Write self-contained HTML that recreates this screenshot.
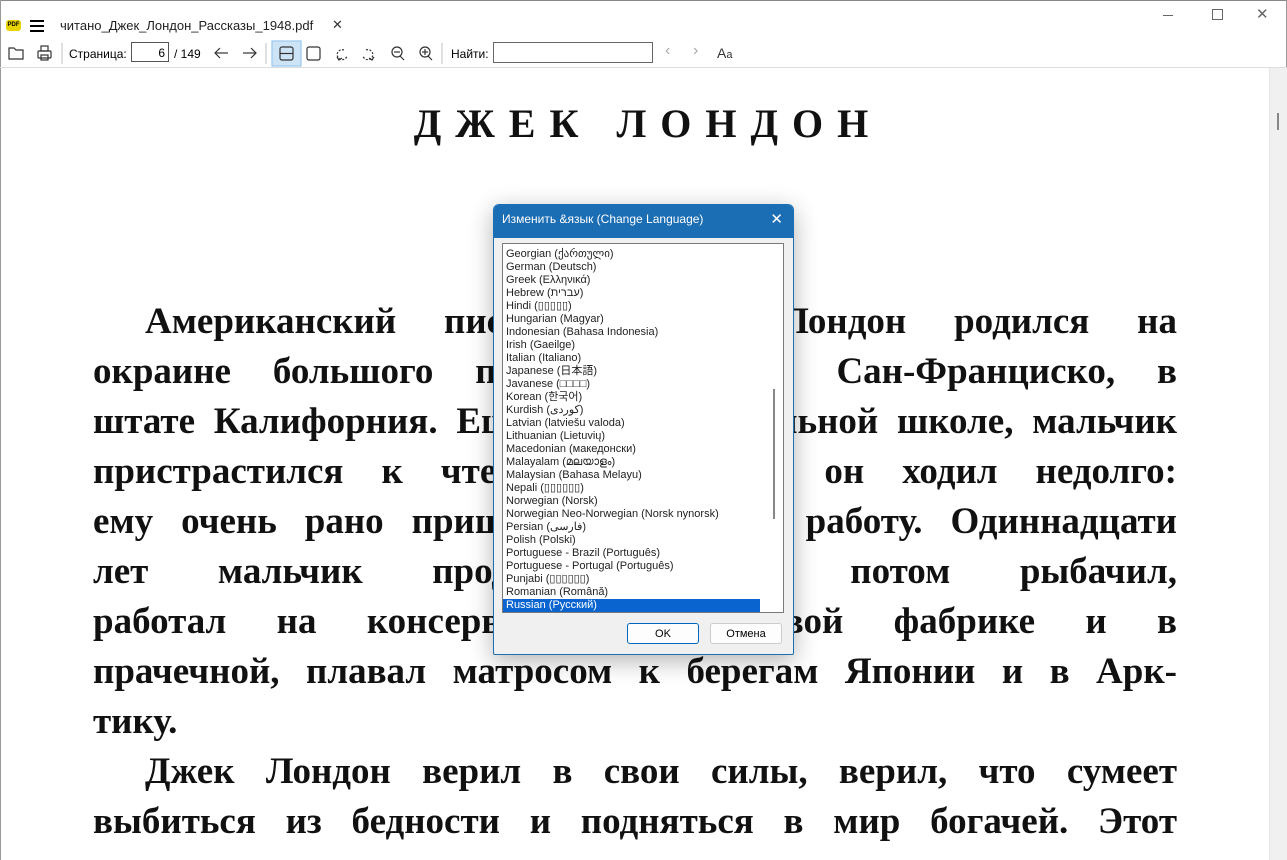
<!DOCTYPE html>
<html><head><meta charset="utf-8"><style>
body{margin:0;width:1287px;height:860px;overflow:hidden;background:#fff;font-family:"Liberation Sans","Noto Sans CJK JP",sans-serif;position:relative}
.abs{position:absolute}
.ui{font-size:12px;color:#000}
.line{position:absolute;left:93px;width:1084px;font-family:"Liberation Serif",serif;font-weight:bold;font-size:37px;text-align:justify;text-align-last:justify;white-space:nowrap;line-height:44px;color:#111}
.line.nj{text-align-last:left}
.row{height:13px;line-height:13px;font-size:11px;padding-left:3px;white-space:nowrap;color:#222}
</style></head><body>
<div class="abs" style="left:0;top:0;width:1287px;height:1px;background:#888"></div>
<div class="abs" style="left:0;top:0;width:1px;height:860px;background:#999"></div>
<div class="abs" style="right:0;top:0;width:1px;height:860px;background:#999"></div>
<div class="abs" style="left:6px;top:20px;width:15px;height:11px;background:#e8d400;border-radius:3px;font-size:6px;font-weight:bold;text-align:center;line-height:11px">PDF</div>
<div class="abs" style="left:30px;top:20px;width:14px;height:2px;background:#000;box-shadow:0 5px 0 #000,0 10px 0 #000"></div>
<div class="abs ui" style="left:60px;top:18px;font-size:13px;color:#222">читано_Джек_Лондон_Рассказы_1948.pdf</div>
<div class="abs" style="left:332px;top:17px;font-size:13px;color:#333">✕</div>
<div class="abs" style="left:1163px;top:15px;width:10px;height:1px;background:#666"></div>
<div class="abs" style="left:1212px;top:9px;width:9px;height:9px;border:1px solid #666"></div>
<div class="abs" style="left:1256px;top:5px;font-size:15px;color:#666">✕</div>
<svg class="abs" style="left:0;top:40px" width="460" height="28" fill="none" stroke="#333" stroke-width="1.2">
<path d="M9 8h5l2 2h7v9H9z"/>
<rect x="38" y="11" width="13" height="7" rx="1"/><rect x="41" y="6" width="7" height="5"/><rect x="41" y="15" width="7" height="5"/>
<line x1="62" y1="3" x2="62" y2="24" stroke="#ccc"/>
<line x1="215" y1="13" x2="228" y2="13"/><path d="M220 8l-5 5 5 5"/>
<line x1="243" y1="13" x2="256" y2="13"/><path d="M251 8l5 5-5 5"/>
<line x1="266" y1="3" x2="266" y2="24" stroke="#ccc"/>
<rect x="272" y="1" width="29" height="25" fill="#cde4f7" stroke="#99c9ef"/>
<rect x="280" y="7" width="13" height="13" rx="2"/><line x1="280" y1="13.5" x2="293" y2="13.5"/>
<rect x="307" y="7" width="13" height="13" rx="2"/>
<path d="M344 10a5 5 0 1 0 3 6" stroke-dasharray="2 1.5"/><path d="M337 17l2 3 3-2"/>
<path d="M366 10a5 5 0 1 1 -3 6" stroke-dasharray="2 1.5"/><path d="M374 17l-2 3-3-2"/>
<circle cx="397" cy="12" r="5"/><line x1="400" y1="16" x2="404" y2="20"/><line x1="394" y1="12" x2="400" y2="12"/>
<circle cx="425" cy="12" r="5"/><line x1="428" y1="16" x2="432" y2="20"/><line x1="422" y1="12" x2="428" y2="12"/><line x1="425" y1="9" x2="425" y2="15"/>
<line x1="442" y1="3" x2="442" y2="24" stroke="#ccc"/>
</svg>
<div class="abs ui" style="left:69px;top:47px">Страница:</div>
<div class="abs ui" style="left:131px;top:42px;width:38px;height:20px;border:1px solid #555;text-align:right;line-height:20px;box-sizing:border-box;padding-right:3px">6</div>
<div class="abs ui" style="left:174px;top:47px">/ 149</div>
<div class="abs ui" style="left:451px;top:47px">Найти:</div>
<div class="abs" style="left:493px;top:42px;width:160px;height:21px;border:1px solid #666;box-sizing:border-box"></div>
<div class="abs" style="left:665px;top:42px;font-size:16px;color:#aaa">‹</div>
<div class="abs" style="left:693px;top:42px;font-size:16px;color:#aaa">›</div>
<div class="abs" style="left:717px;top:45px;font-size:14px;color:#333">A<span style="font-size:11px">a</span></div>
<div class="abs" style="left:0;top:67px;width:1287px;height:1px;background:#ddd"></div>
<div class="abs" style="left:1269px;top:68px;width:17px;height:792px;background:#f0f0f0;border-left:1px solid #e6e6e6"></div>
<div class="abs" style="left:1277px;top:113px;width:2px;height:17px;background:#888"></div>
<div class="abs" style="left:14px;width:1268px;top:100px;text-align:center;font-family:'Liberation Serif',serif;font-weight:bold;font-size:40px;letter-spacing:14px;color:#111">ДЖЕК ЛОНДОН</div>
<div class="line" style="top:300px;left:145px;width:1032px">Американский писатель Джек Лондон родился на</div>
<div class="line" style="top:350px">окраине большого портового города Сан-Франциско, в</div>
<div class="line" style="top:400px">штате Калифорния. Еще учась в начальной школе, мальчик</div>
<div class="line" style="top:450px">пристрастился к чтению. В школу он ходил недолго:</div>
<div class="line" style="top:500px">ему очень рано пришлось пойти на работу. Одиннадцати</div>
<div class="line" style="top:550px">лет мальчик продавал газеты, потом рыбачил,</div>
<div class="line" style="top:600px">работал на консервной и джутовой фабрике и в</div>
<div class="line" style="top:650px">прачечной, плавал матросом к берегам Японии и в Арк-</div>
<div class="line nj" style="top:700px">тику.</div>
<div class="line" style="top:750px;left:145px;width:1032px">Джек Лондон верил в свои силы, верил, что сумеет</div>
<div class="line" style="top:800px">выбиться из бедности и подняться в мир богачей. Этот</div>
<div class="abs" style="left:493px;top:204px;width:301px;height:451px;background:#f0f0f0;border:1px solid #1a6fb5;box-sizing:border-box;border-radius:6px 6px 2px 2px;box-shadow:0 6px 24px rgba(0,0,0,.3);overflow:hidden">
 <div style="height:33px;background:#1b6db4;color:#fff;font-size:12px;line-height:29px;padding-left:8px;position:relative">Изменить &amp;язык (Change Language)<span style="position:absolute;right:10px;top:0;font-size:15px">✕</span></div>
 <div style="position:absolute;left:8px;top:38px;width:282px;height:370px;background:#fff;border:1px solid #7a7a7a;box-sizing:border-box;padding-top:4px">
  <div class="row">Georgian (ქართული)</div><div class="row">German (Deutsch)</div><div class="row">Greek (Ελληνικά)</div><div class="row">Hebrew (עברית)</div><div class="row">Hindi (▯▯▯▯▯)</div><div class="row">Hungarian (Magyar)</div><div class="row">Indonesian (Bahasa Indonesia)</div><div class="row">Irish (Gaeilge)</div><div class="row">Italian (Italiano)</div><div class="row">Japanese (日本語)</div><div class="row">Javanese (□□□□)</div><div class="row">Korean (한국어)</div><div class="row">Kurdish (کوردی)</div><div class="row">Latvian (latviešu valoda)</div><div class="row">Lithuanian (Lietuvių)</div><div class="row">Macedonian (македонски)</div><div class="row">Malayalam (മലയാളം)</div><div class="row">Malaysian (Bahasa Melayu)</div><div class="row">Nepali (▯▯▯▯▯▯)</div><div class="row">Norwegian (Norsk)</div><div class="row">Norwegian Neo-Norwegian (Norsk nynorsk)</div><div class="row">Persian (فارسی)</div><div class="row">Polish (Polski)</div><div class="row">Portuguese - Brazil (Português)</div><div class="row">Portuguese - Portugal (Português)</div><div class="row">Punjabi (▯▯▯▯▯▯)</div><div class="row">Romanian (Română)</div>
  <div class="row" style="background:#0a64d0;color:#fff;width:257px;box-sizing:border-box">Russian (Русский)</div>
  <div style="position:absolute;right:8px;top:145px;width:2px;height:130px;background:#888"></div>
 </div>
 <div style="position:absolute;left:133px;top:418px;width:72px;height:21px;border:1px solid #0067c0;border-radius:3px;background:#fdfdfd;font-size:11px;text-align:center;line-height:21px;box-sizing:border-box">OK</div>
 <div style="position:absolute;left:216px;top:418px;width:72px;height:21px;border:1px solid #ccc;border-radius:3px;background:#fdfdfd;font-size:11px;text-align:center;line-height:21px;box-sizing:border-box">Отмена</div>
</div>
</body></html>
